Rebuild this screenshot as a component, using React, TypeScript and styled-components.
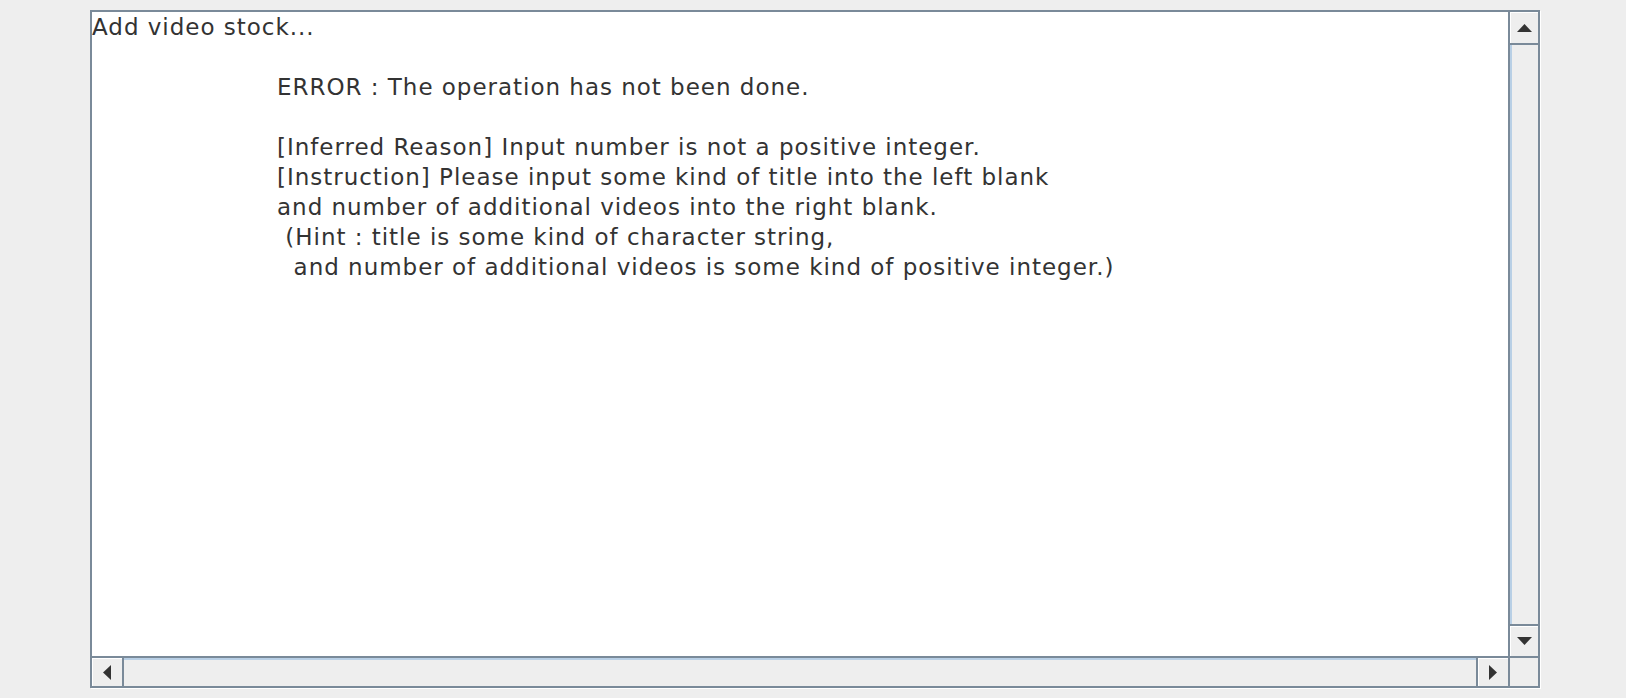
import React from "react";
import styled, { createGlobalStyle } from "styled-components";

const GlobalStyle = createGlobalStyle`
    html, body {
        margin: 0;
        padding: 0;
        background: #eeeeee;
    }
`;

const messageLines = [
    "ERROR : The operation has not been done.",
    "",
    "[Inferred Reason] Input number is not a positive integer.",
    "[Instruction] Please input some kind of title into the left blank",
    "and number of additional videos into the right blank.",
    " (Hint : title is some kind of character string,",
    "  and number of additional videos is some kind of positive integer.)",
];

type Dir = "up" | "down" | "left" | "right";

const arrowPoints: { [key in Dir]: string } = {
    up: "7.5,0 15,8 0,8",
    down: "0,0 15,0 7.5,8",
    left: "8,0 8,15 0,7.5",
    right: "0,0 8,7.5 0,15",
};

const Arrow = ({ dir }: { dir: Dir }) => {
    const vertical = dir === "up" || dir === "down";
    const w = vertical ? 15 : 8;
    const h = vertical ? 8 : 15;
    return (
        <svg width={w} height={h} viewBox={`0 0 ${w} ${h}`}>
            <polygon points={arrowPoints[dir]} fill="#333333" />
        </svg>
    );
};

const App: React.FC = () => {
    return (
        <>
            <GlobalStyle />
            <Page>
                <ScrollPane>
                    <Viewport>
                        <TextLine>Add video stock...</TextLine>
                        <TextLine>{" "}</TextLine>
                        <Message>
                            {messageLines.map((line, i) => (
                                <TextLine key={i}>{line || " "}</TextLine>
                            ))}
                        </Message>
                    </Viewport>
                    <VScrollBar>
                        <ScrollButton $edge="bottom" $size={33}>
                            <Arrow dir="up" />
                        </ScrollButton>
                        <VTrack />
                        <ScrollButton $edge="top" $size={32}>
                            <Arrow dir="down" />
                        </ScrollButton>
                    </VScrollBar>
                    <HScrollBar>
                        <ScrollButton $edge="right" $size={32}>
                            <Arrow dir="left" />
                        </ScrollButton>
                        <HTrack />
                        <ScrollButton $edge="left" $size={32}>
                            <Arrow dir="right" />
                        </ScrollButton>
                    </HScrollBar>
                    <Corner />
                </ScrollPane>
            </Page>
        </>
    );
};

export default App;

const Page = styled.div`
    width: 1626px;
    height: 698px;
    box-sizing: border-box;
    padding: 10px 0 0 90px;
    background: #eeeeee;
`;

const ScrollPane = styled.div`
    width: 1450px;
    height: 678px;
    box-sizing: border-box;
    border: 2px solid #7a8a99;
    box-shadow: 1px 1px 0 #ffffff;
    display: grid;
    grid-template-columns: 1fr 30px;
    grid-template-rows: 1fr 30px;
    background: #eeeeee;
`;

const Viewport = styled.div`
    background: #ffffff;
    overflow: hidden;
    font-family: "DejaVu Sans", "Liberation Sans", sans-serif;
    font-size: 23px;
    letter-spacing: 0.98px;
    line-height: 30px;
    color: #333333;
`;

const TextLine = styled.div`
    white-space: pre;
    height: 30px;
`;

const Message = styled.div`
    margin-left: 185px;
`;

const VScrollBar = styled.div`
    display: flex;
    flex-direction: column;
    border-left: 2px solid #7a8a99;
    background: #eeeeee;
`;

const HScrollBar = styled.div`
    display: flex;
    border-top: 2px solid #7a8a99;
    background: #eeeeee;
`;

const ScrollButton = styled.div<{ $edge: "top" | "bottom" | "left" | "right"; $size: number }>`
    flex: 0 0 ${(p) => p.$size}px;
    box-sizing: border-box;
    display: flex;
    align-items: center;
    justify-content: center;
    background: #eeeeee;
    box-shadow: inset 1px 1px 0 #ffffff;
    border-${(p) => p.$edge}: 2px solid #7a8a99;
`;

const VTrack = styled.div`
    flex: 1;
    background: #eeeeee;
    border-left: 2px solid #b8cfe5;
`;

const HTrack = styled.div`
    flex: 1;
    background: #eeeeee;
    border-top: 2px solid #b8cfe5;
`;

const Corner = styled.div`
    background: #eeeeee;
    border-left: 2px solid #7a8a99;
    border-top: 2px solid #7a8a99;
`;
